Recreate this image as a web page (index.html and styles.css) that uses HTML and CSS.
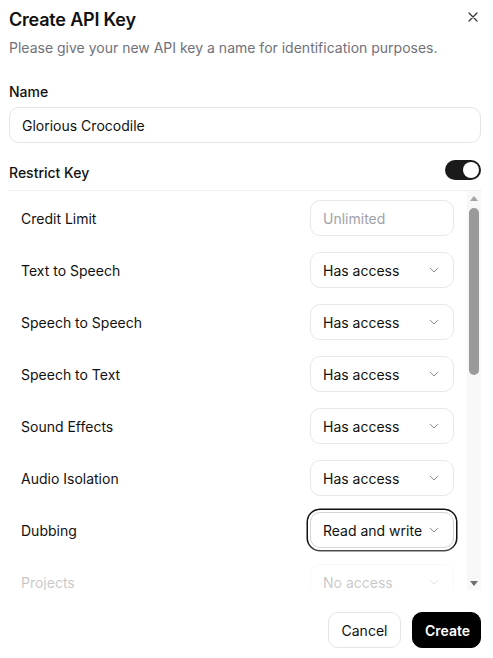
FILE: index.html
```html
<!DOCTYPE html>
<html lang="en">
<head>
    <meta charset="UTF-8">
    <title>Create API Key</title>
    <link rel="stylesheet" href="styles.css">
</head>
<body>

<div class="dialog">
    <!-- Header -->
    <div class="dialog-header">
        <h2 class="dialog-title">Create API Key</h2>
        <button class="close-btn" aria-label="Close">
            <svg width="10" height="10" viewBox="0 0 10 10"><path d="M1 1L9 9M9 1L1 9" stroke="#333" stroke-width="1.2" fill="none" stroke-linecap="round"/></svg>
        </button>
    </div>
    <p class="dialog-subtitle">Please give your new API key a name for identification purposes.</p>

    <label class="field-label" for="keyName">Name</label>
    <input class="text-input" id="keyName" type="text" value="Glorious Crocodile">

    <div class="restrict-row">
        <span class="field-label">Restrict Key</span>
        <span class="toggle on"><span class="knob"></span></span>
    </div>

    <!-- Permissions list -->
    <div class="perm-box">
        <div class="perm-list">
            <div class="perm-row">
                <span class="perm-name">Credit Limit</span>
                <input class="perm-input" type="text" placeholder="Unlimited">
            </div>
            <div class="perm-row">
                <span class="perm-name">Text to Speech</span>
                <div class="perm-select">Has access <svg class="chevron" width="10" height="6" viewBox="0 0 10 6"><path d="M1 1L5 5L9 1" stroke="#8a8a8a" stroke-width="1" fill="none"/></svg></div>
            </div>
            <div class="perm-row">
                <span class="perm-name">Speech to Speech</span>
                <div class="perm-select">Has access <svg class="chevron" width="10" height="6" viewBox="0 0 10 6"><path d="M1 1L5 5L9 1" stroke="#8a8a8a" stroke-width="1" fill="none"/></svg></div>
            </div>
            <div class="perm-row">
                <span class="perm-name">Speech to Text</span>
                <div class="perm-select">Has access <svg class="chevron" width="10" height="6" viewBox="0 0 10 6"><path d="M1 1L5 5L9 1" stroke="#8a8a8a" stroke-width="1" fill="none"/></svg></div>
            </div>
            <div class="perm-row">
                <span class="perm-name">Sound Effects</span>
                <div class="perm-select">Has access <svg class="chevron" width="10" height="6" viewBox="0 0 10 6"><path d="M1 1L5 5L9 1" stroke="#8a8a8a" stroke-width="1" fill="none"/></svg></div>
            </div>
            <div class="perm-row">
                <span class="perm-name">Audio Isolation</span>
                <div class="perm-select">Has access <svg class="chevron" width="10" height="6" viewBox="0 0 10 6"><path d="M1 1L5 5L9 1" stroke="#8a8a8a" stroke-width="1" fill="none"/></svg></div>
            </div>
            <div class="perm-row">
                <span class="perm-name">Dubbing</span>
                <div class="perm-select focused">Read and write <svg class="chevron" width="10" height="6" viewBox="0 0 10 6"><path d="M1 1L5 5L9 1" stroke="#8a8a8a" stroke-width="1" fill="none"/></svg></div>
            </div>
            <div class="perm-row">
                <span class="perm-name">Projects</span>
                <div class="perm-select">No access <svg class="chevron" width="10" height="6" viewBox="0 0 10 6"><path d="M1 1L5 5L9 1" stroke="#8a8a8a" stroke-width="1" fill="none"/></svg></div>
            </div>
        </div>

        <!-- fake scrollbar -->
        <div class="scrollbar">
            <span class="arrow up"></span>
            <div class="track"><div class="thumb"></div></div>
            <span class="arrow down"></span>
        </div>
    </div>

    <div class="dialog-footer">
        <button class="btn btn-outline">Cancel</button>
        <button class="btn btn-dark">Create</button>
    </div>
</div>

</body>
</html>
```

FILE: styles.css
```css
/* Reset */
* {
    box-sizing: border-box;
    margin: 0;
    padding: 0;
}

body {
    font-family: Inter, 'Noto Sans', Arial, sans-serif;
    background: #fff;
    color: #111;
    width: 493px;
    height: 658px;
    overflow: hidden;
}

.dialog {
    padding: 8px 12px 11px 9px;
    display: flex;
    flex-direction: column;
}

.dialog-header {
    display: flex;
    justify-content: space-between;
    align-items: flex-start;
}

.dialog-title {
    font-size: 18px;
    line-height: 24px;
    font-weight: 600;
    letter-spacing: -0.2px;
}

.close-btn {
    border: none;
    background: none;
    width: 10px;
    height: 10px;
    margin-top: 4px;
    margin-right: 3px;
    display: flex;
}

.dialog-subtitle {
    margin-top: 6px;
    font-size: 14px;
    line-height: 20px;
    color: #71717a;
}

.field-label {
    display: block;
    margin-top: 24px;
    font-size: 14px;
    line-height: 20px;
    font-weight: 500;
}

.text-input {
    margin-top: 5px;
    width: 100%;
    height: 36px;
    padding: 0 12px;
    border: 1px solid #e5e5e5;
    border-radius: 10px;
    font-family: inherit;
    font-size: 14px;
    color: #111;
    outline: none;
}

.restrict-row {
    margin-top: 16px;
    height: 32px;
    padding-bottom: 4px;
    display: flex;
    justify-content: space-between;
    align-items: center;
    border-bottom: 1px solid #f0f0f0;
}

.restrict-row .field-label {
    margin-top: 0;
}

.toggle {
    width: 36px;
    height: 20px;
    margin-top: -6px;
    border-radius: 10px;
    background: #1a1a1a;
    display: flex;
    align-items: center;
    padding: 2px;
}

.toggle.on {
    justify-content: flex-end;
}

.knob {
    width: 16px;
    height: 16px;
    border-radius: 50%;
    background: #fff;
}

/* Permission list */
.perm-box {
    display: flex;
    height: 399px;
    overflow: hidden;
}

.perm-list {
    flex: 1;
    position: relative;
    overflow: hidden;
    padding-top: 1px;
}

.perm-list::after {
    content: "";
    position: absolute;
    left: 0;
    right: 0;
    bottom: 0;
    height: 46px;
    background: linear-gradient(to bottom, rgba(255,255,255,0), rgba(255,255,255,0.72) 45%, rgba(255,255,255,0.78));
}

.perm-row {
    height: 52px;
    flex-shrink: 0;
    display: flex;
    align-items: center;
    justify-content: space-between;
    padding: 0 13px 0 12px;
}

.perm-name {
    font-size: 14px;
    color: #111;
}

.perm-input,
.perm-select {
    width: 144px;
    height: 36px;
    border: 1px solid #e8e8e8;
    border-radius: 10px;
    padding: 0 12px;
    font-family: inherit;
    font-size: 14px;
    color: #111;
    background: #fff;
}

.perm-input {
    outline: none;
}

.perm-input::placeholder {
    color: #a1a1aa;
}

.perm-select {
    display: flex;
    align-items: center;
    justify-content: space-between;
}

.chevron {
    margin-right: 2px;
}

.perm-select.focused {
    border-color: #d4d4d4;
    box-shadow: 0 0 0 2px #fff, 0 0 0 3.5px #111;
}

/* Fake scrollbar */
.scrollbar {
    width: 14px;
    background: #f8f8f8;
    display: flex;
    flex-direction: column;
    align-items: center;
    padding: 5px 0 4px;
}

.arrow {
    width: 0;
    height: 0;
    border-left: 4px solid transparent;
    border-right: 4px solid transparent;
}

.arrow.up {
    border-bottom: 5px solid #a3a3a3;
}

.arrow.down {
    border-top: 5px solid #6e6e6e;
}

.track {
    flex: 1;
    width: 100%;
    padding: 7px 2px 0;
}

.thumb {
    height: 167px;
    border-radius: 5px;
    background: #9a9a9a;
}

.dialog-footer {
    margin-top: 22px;
    display: flex;
    justify-content: flex-end;
    gap: 11px;
}

.btn {
    height: 36px;
    padding: 0 12px;
    border-radius: 10px;
    font-family: inherit;
    font-size: 14px;
    cursor: pointer;
}

.btn-outline {
    background: #fff;
    border: 1px solid #e5e5e5;
    color: #111;
    width: 73px;
}

.btn-dark {
    background: #000;
    border: 1px solid #000;
    color: #fff;
    font-weight: 600;
    width: 69px;
}
```
